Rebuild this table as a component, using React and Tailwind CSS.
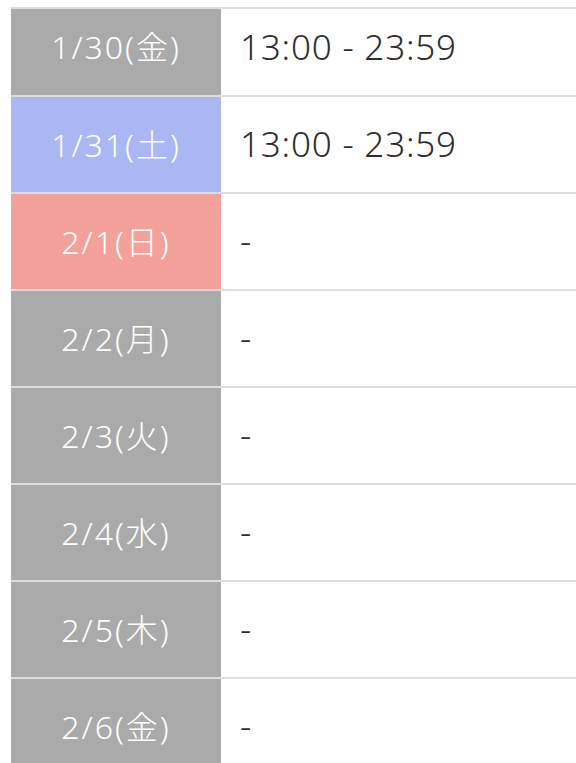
import React from 'react';

const rows = [
  { date: '1/30(金)', time: '13:00 - 23:59', bg: 'bg-[#aaaaaa]' },
  { date: '1/31(土)', time: '13:00 - 23:59', bg: 'bg-[#a9b8f2]' },
  { date: '2/1(日)', time: '-', bg: 'bg-[#f4a19b]' },
  { date: '2/2(月)', time: '-', bg: 'bg-[#aaaaaa]' },
  { date: '2/3(火)', time: '-', bg: 'bg-[#aaaaaa]' },
  { date: '2/4(水)', time: '-', bg: 'bg-[#aaaaaa]' },
  { date: '2/5(木)', time: '-', bg: 'bg-[#aaaaaa]' },
  { date: '2/6(金)', time: '-', bg: 'bg-[#aaaaaa]' },
];

export default function App() {
  return (
    <div
      className="w-[576px] h-[763px] overflow-hidden bg-white pl-[11px] pt-[7px]"
      style={{ fontFamily: '"Noto Sans", "Noto Sans CJK JP", sans-serif' }}
    >
      <div className="border-t-2 border-[#dddddd]">
        {rows.map((r, i) => (
          <div
            key={i}
            className={`flex border-b-2 border-[#dddddd] ${i === 0 ? 'h-[88px]' : 'h-[97px]'}`}
          >
            <div
              className={`w-[210px] shrink-0 flex items-center justify-center text-white text-[32px] font-light tracking-[2px] ${r.bg} ${i === 0 ? 'pb-[10px]' : ''}`}
            >
              {r.date}
            </div>
            <div
              className={`flex-1 flex items-center pl-[19px] text-[#2e2e2e] text-[35px] font-light tracking-[0.8px] ${i === 0 ? 'pb-[10px]' : ''}`}
            >
              {r.time}
            </div>
          </div>
        ))}
      </div>
    </div>
  );
}
